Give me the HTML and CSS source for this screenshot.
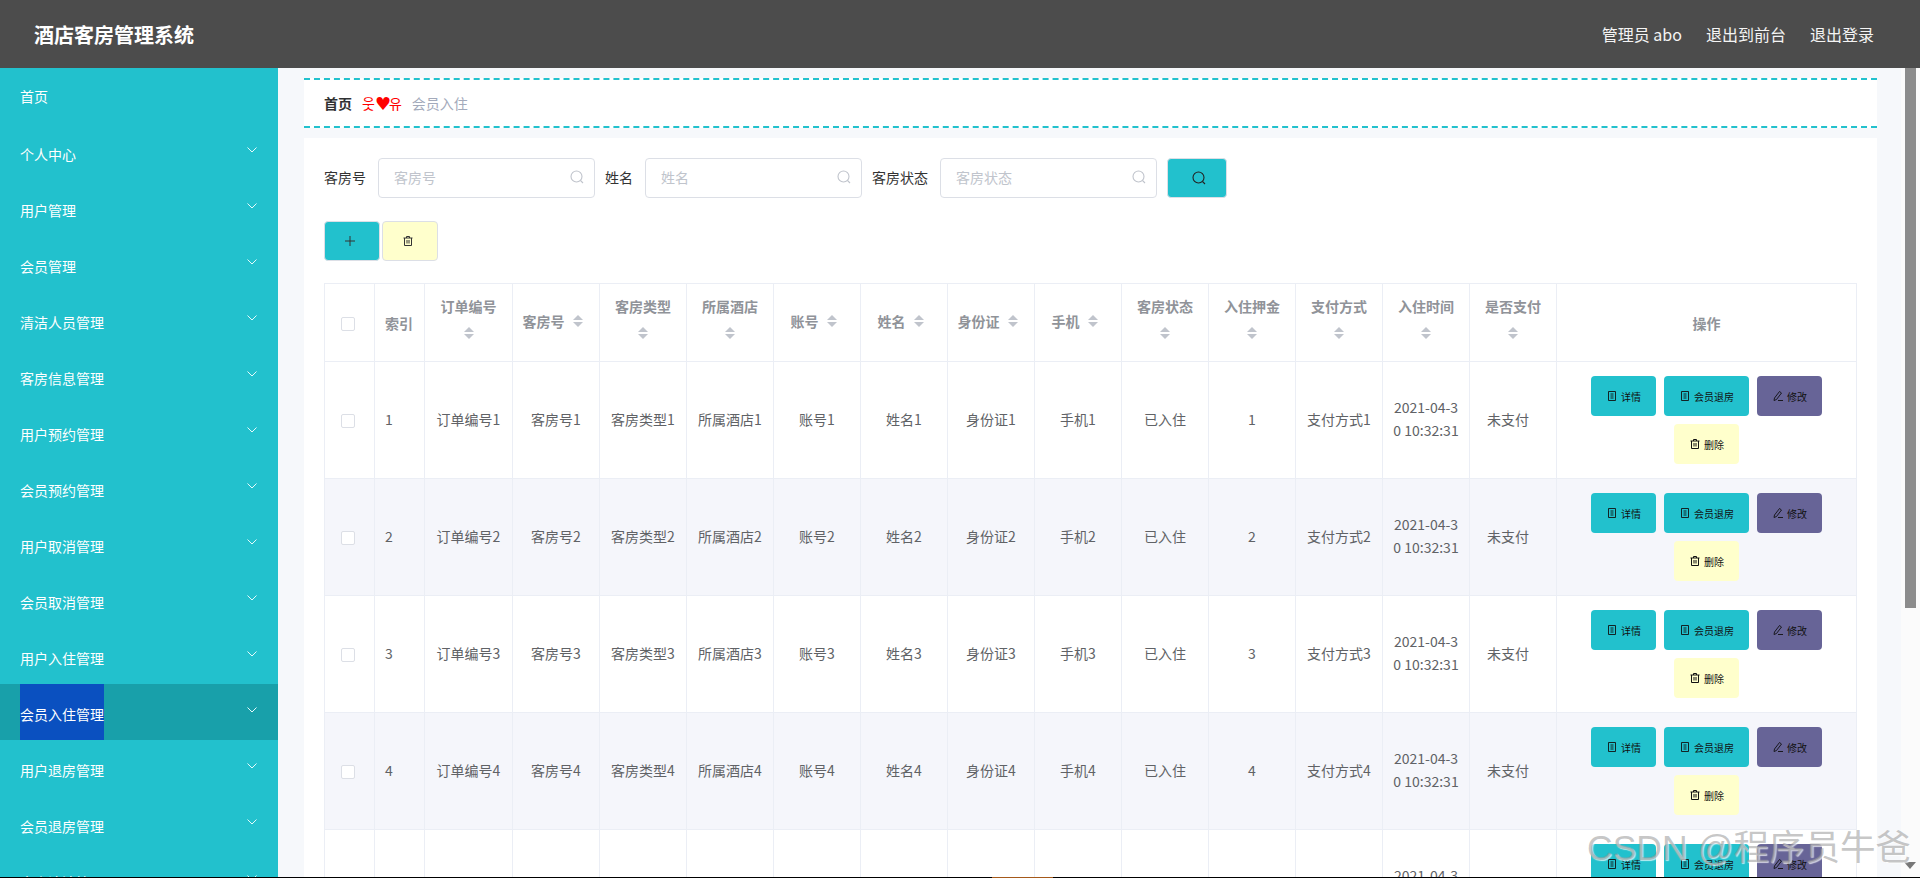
FILE: index.html
```html
<!DOCTYPE html>
<html>
<head>
    <title>酒店客房管理系统</title>
    <link rel="stylesheet" href="styles.css">
</head>
<body>
    <svg class="sprite" xmlns="http://www.w3.org/2000/svg">
        <symbol id="i-search" viewBox="0 0 14 14"><circle cx="6.5" cy="6.5" r="5.5" fill="none" stroke="currentColor" stroke-width="1.1"/><path d="M10.5 10.5L13 13" fill="none" stroke="currentColor" stroke-width="1.1"/></symbol>
        <symbol id="i-plus" viewBox="0 0 12 12"><path d="M6 1v10M1 6h10" fill="none" stroke="currentColor" stroke-width="1"/></symbol>
        <symbol id="i-trash" viewBox="0 0 12 12"><path d="M1.5 3h9M4.5 3V1.5h3V3M2.5 3v7.5h7V3M5 5v3.5M7 5v3.5" fill="none" stroke="currentColor" stroke-width="1"/></symbol>
        <symbol id="i-doc" viewBox="0 0 12 12"><path d="M2.5 1.5h7v9h-7zM4.5 4h3M4.5 6h3M4.5 8h3" fill="none" stroke="currentColor" stroke-width=".9"/></symbol>
        <symbol id="i-edit" viewBox="0 0 12 12"><path d="M7.5 1.5l2 1.5L4.5 9.5l-2.5 1 .5-2.5zM6 10.5h5" fill="none" stroke="currentColor" stroke-width=".9"/></symbol>
        <symbol id="i-down" viewBox="0 0 10 6"><path d="M.5 .5L5 5 9.5 .5" fill="none" stroke="currentColor" stroke-width="1"/></symbol>
    </svg>

    <header class="topbar">
        <div class="brand">酒店客房管理系统</div>
        <div class="top-links">
            <span>管理员 abo</span>
            <span>退出到前台</span>
            <span>退出登录</span>
        </div>
    </header>

    <div class="layout">
        <ul class="side-menu">
            <li class="menu-item home"><span class="menu-text">首页</span></li>
            <li class="menu-item"><span class="menu-text">个人中心</span><svg class="chevron"><use href="#i-down"/></svg></li>
            <li class="menu-item"><span class="menu-text">用户管理</span><svg class="chevron"><use href="#i-down"/></svg></li>
            <li class="menu-item"><span class="menu-text">会员管理</span><svg class="chevron"><use href="#i-down"/></svg></li>
            <li class="menu-item"><span class="menu-text">清洁人员管理</span><svg class="chevron"><use href="#i-down"/></svg></li>
            <li class="menu-item"><span class="menu-text">客房信息管理</span><svg class="chevron"><use href="#i-down"/></svg></li>
            <li class="menu-item"><span class="menu-text">用户预约管理</span><svg class="chevron"><use href="#i-down"/></svg></li>
            <li class="menu-item"><span class="menu-text">会员预约管理</span><svg class="chevron"><use href="#i-down"/></svg></li>
            <li class="menu-item"><span class="menu-text">用户取消管理</span><svg class="chevron"><use href="#i-down"/></svg></li>
            <li class="menu-item"><span class="menu-text">会员取消管理</span><svg class="chevron"><use href="#i-down"/></svg></li>
            <li class="menu-item"><span class="menu-text">用户入住管理</span><svg class="chevron"><use href="#i-down"/></svg></li>
            <li class="menu-item active"><span class="menu-text">会员入住管理</span><svg class="chevron"><use href="#i-down"/></svg></li>
            <li class="menu-item"><span class="menu-text">用户退房管理</span><svg class="chevron"><use href="#i-down"/></svg></li>
            <li class="menu-item"><span class="menu-text">会员退房管理</span><svg class="chevron"><use href="#i-down"/></svg></li>
            <li class="menu-item"><span class="menu-text">客房清洁管理</span><svg class="chevron"><use href="#i-down"/></svg></li>
        </ul>

        <main class="main">
            <div class="crumbs">
                <span class="crumb-home">首页</span>
                <span class="crumb-sep">웃<b class="heart">♥</b>유</span>
                <span class="crumb-now">会员入住</span>
            </div>

            <div class="card">
                <div class="search-row">
                    <label>客房号</label>
                    <div class="search-input"><span>客房号</span><svg class="input-icon"><use href="#i-search"/></svg></div>
                    <label>姓名</label>
                    <div class="search-input"><span>姓名</span><svg class="input-icon"><use href="#i-search"/></svg></div>
                    <label>客房状态</label>
                    <div class="search-input"><span>客房状态</span><svg class="input-icon"><use href="#i-search"/></svg></div>
                    <button class="btn-search"><svg class="icon-14"><use href="#i-search"/></svg></button>
                </div>

                <div class="tool-row">
                    <button class="btn-tool teal"><svg class="icon-12"><use href="#i-plus"/></svg></button>
                    <button class="btn-tool yellow"><svg class="icon-12"><use href="#i-trash"/></svg></button>
                </div>

                <table class="grid">
                    <colgroup>
                        <col class="col-s"><col class="col-s"><col class="col-l">
                        <col class="col-m"><col class="col-m"><col class="col-m"><col class="col-m">
                        <col class="col-m"><col class="col-m"><col class="col-m"><col class="col-m">
                        <col class="col-m"><col class="col-m"><col class="col-m"><col class="col-m">
                        <col class="col-op">
                    </colgroup>
                    <thead>
                        <tr>
                            <th><span class="check"></span></th>
                            <th class="left">索引</th>
                            <th><div class="th-in"><span>订单编号</span><i class="sort"></i></div></th>
                            <th><div class="th-in short"><span>客房号</span><i class="sort"></i></div></th>
                            <th><div class="th-in"><span>客房类型</span><i class="sort"></i></div></th>
                            <th><div class="th-in"><span>所属酒店</span><i class="sort"></i></div></th>
                            <th><div class="th-in short"><span>账号</span><i class="sort"></i></div></th>
                            <th><div class="th-in short"><span>姓名</span><i class="sort"></i></div></th>
                            <th><div class="th-in short"><span>身份证</span><i class="sort"></i></div></th>
                            <th><div class="th-in short"><span>手机</span><i class="sort"></i></div></th>
                            <th><div class="th-in"><span>客房状态</span><i class="sort"></i></div></th>
                            <th><div class="th-in"><span>入住押金</span><i class="sort"></i></div></th>
                            <th><div class="th-in"><span>支付方式</span><i class="sort"></i></div></th>
                            <th><div class="th-in"><span>入住时间</span><i class="sort"></i></div></th>
                            <th><div class="th-in"><span>是否支付</span><i class="sort"></i></div></th>
                            <th>操作</th>
                        </tr>
                    </thead>
                    <tbody>
                        <tr>
                            <td><span class="check"></span></td><td class="left">1</td>
                            <td>订单编号1</td><td>客房号1</td><td>客房类型1</td><td>所属酒店1</td><td>账号1</td><td>姓名1</td><td>身份证1</td><td>手机1</td>
                            <td>已入住</td><td>1</td><td>支付方式1</td><td>2021-04-30 10:32:31</td><td class="pay">未支付</td>
                            <td class="ops"><div class="op-wrap">
                                <button class="btn-op teal"><svg class="icon-12"><use href="#i-doc"/></svg>详情</button>
                                <button class="btn-op teal"><svg class="icon-12"><use href="#i-doc"/></svg>会员退房</button>
                                <button class="btn-op purple"><svg class="icon-12"><use href="#i-edit"/></svg>修改</button>
                                <button class="btn-op yellow"><svg class="icon-12"><use href="#i-trash"/></svg>删除</button>
                            </div></td>
                        </tr>
                        <tr>
                            <td><span class="check"></span></td><td class="left">2</td>
                            <td>订单编号2</td><td>客房号2</td><td>客房类型2</td><td>所属酒店2</td><td>账号2</td><td>姓名2</td><td>身份证2</td><td>手机2</td>
                            <td>已入住</td><td>2</td><td>支付方式2</td><td>2021-04-30 10:32:31</td><td class="pay">未支付</td>
                            <td class="ops"><div class="op-wrap">
                                <button class="btn-op teal"><svg class="icon-12"><use href="#i-doc"/></svg>详情</button>
                                <button class="btn-op teal"><svg class="icon-12"><use href="#i-doc"/></svg>会员退房</button>
                                <button class="btn-op purple"><svg class="icon-12"><use href="#i-edit"/></svg>修改</button>
                                <button class="btn-op yellow"><svg class="icon-12"><use href="#i-trash"/></svg>删除</button>
                            </div></td>
                        </tr>
                        <tr>
                            <td><span class="check"></span></td><td class="left">3</td>
                            <td>订单编号3</td><td>客房号3</td><td>客房类型3</td><td>所属酒店3</td><td>账号3</td><td>姓名3</td><td>身份证3</td><td>手机3</td>
                            <td>已入住</td><td>3</td><td>支付方式3</td><td>2021-04-30 10:32:31</td><td class="pay">未支付</td>
                            <td class="ops"><div class="op-wrap">
                                <button class="btn-op teal"><svg class="icon-12"><use href="#i-doc"/></svg>详情</button>
                                <button class="btn-op teal"><svg class="icon-12"><use href="#i-doc"/></svg>会员退房</button>
                                <button class="btn-op purple"><svg class="icon-12"><use href="#i-edit"/></svg>修改</button>
                                <button class="btn-op yellow"><svg class="icon-12"><use href="#i-trash"/></svg>删除</button>
                            </div></td>
                        </tr>
                        <tr>
                            <td><span class="check"></span></td><td class="left">4</td>
                            <td>订单编号4</td><td>客房号4</td><td>客房类型4</td><td>所属酒店4</td><td>账号4</td><td>姓名4</td><td>身份证4</td><td>手机4</td>
                            <td>已入住</td><td>4</td><td>支付方式4</td><td>2021-04-30 10:32:31</td><td class="pay">未支付</td>
                            <td class="ops"><div class="op-wrap">
                                <button class="btn-op teal"><svg class="icon-12"><use href="#i-doc"/></svg>详情</button>
                                <button class="btn-op teal"><svg class="icon-12"><use href="#i-doc"/></svg>会员退房</button>
                                <button class="btn-op purple"><svg class="icon-12"><use href="#i-edit"/></svg>修改</button>
                                <button class="btn-op yellow"><svg class="icon-12"><use href="#i-trash"/></svg>删除</button>
                            </div></td>
                        </tr>
                        <tr>
                            <td><span class="check"></span></td><td class="left">5</td>
                            <td>订单编号5</td><td>客房号5</td><td>客房类型5</td><td>所属酒店5</td><td>账号5</td><td>姓名5</td><td>身份证5</td><td>手机5</td>
                            <td>已入住</td><td>5</td><td>支付方式5</td><td>2021-04-30 10:32:31</td><td class="pay">未支付</td>
                            <td class="ops"><div class="op-wrap">
                                <button class="btn-op teal"><svg class="icon-12"><use href="#i-doc"/></svg>详情</button>
                                <button class="btn-op teal"><svg class="icon-12"><use href="#i-doc"/></svg>会员退房</button>
                                <button class="btn-op purple"><svg class="icon-12"><use href="#i-edit"/></svg>修改</button>
                                <button class="btn-op yellow"><svg class="icon-12"><use href="#i-trash"/></svg>删除</button>
                            </div></td>
                        </tr>
                    </tbody>
                </table>
            </div>
        </main>

        <div class="scroll-track">
            <div class="scroll-thumb"></div>
            <div class="scroll-arrow"></div>
        </div>
    </div>

    <div class="watermark">CSDN @程序员牛爸</div>
    <div class="bottom-line"><span class="bottom-tab"></span></div>
</body>
</html>
```

FILE: styles.css
```css
* { margin: 0; padding: 0; box-sizing: border-box; }
html, body { height: 878px; overflow: hidden; }
body {
    position: relative; background: #f6f8fb; color: #606266;
    font-family: "Noto Sans CJK SC", "Noto Sans", sans-serif; font-size: 14px;
}
button { font-family: inherit; cursor: pointer; }
svg { display: block; flex: none; }
.sprite { position: absolute; width: 0; height: 0; }
.icon-12 { width: 12px; height: 12px; }
.icon-14 { width: 14px; height: 14px; }

/* top bar */
.topbar {
    display: flex; justify-content: space-between; align-items: center;
    height: 68px; padding: 0 46px 0 34px; background: #4c4c4c; color: white;
}
.brand { font-size: 20px; font-weight: bold; }
.top-links { display: flex; gap: 24px; font-size: 16px; color: #f4f4f4; }

.layout { display: flex; height: 810px; }

/* side menu */
.side-menu { flex: none; width: 278px; list-style: none; overflow: hidden; background: #22c1cd; color: white; }
.menu-item {
    display: flex; justify-content: space-between; align-items: center;
    height: 56px; padding: 0 21px 0 20px;
}
.menu-text { display: block; height: 56px; line-height: 60px; }
.home .menu-text { line-height: 56px; }
.chevron { width: 10px; height: 6px; margin-top: -5px; color: #e4fafb; }
.active { background: #18a0aa; }
.active .menu-text { background: #0a50c0; }

/* content */
.main { flex: 1; min-width: 0; padding: 10px 24px 0 26px; overflow: hidden; }
.crumbs {
    display: flex; align-items: center; gap: 10px;
    height: 50px; padding: 0 20px; margin-bottom: 10px; background: white;
    border-top: 2px dashed #22c1cd; border-bottom: 2px dashed #22c1cd;
}
.crumb-home { font-weight: bold; color: #303133; }
.crumb-sep { display: flex; align-items: center; color: red; font-family: "Noto Sans CJK KR", sans-serif; }
.heart { width: 14px; margin-top: 2px; text-align: center; font-family: "DejaVu Sans", sans-serif; font-size: 18px; font-weight: normal; line-height: 20px; }
.crumb-now { color: #a3aabb; }

.card { padding: 20px; background: white; }
.search-row { display: flex; align-items: center; height: 40px; color: #333; }
.search-row label { margin: -2px 12px 0 0; }
.search-input {
    display: flex; justify-content: space-between; align-items: center;
    width: 217px; height: 40px; margin-right: 10px; padding: 0 10px 2px 15px;
    border: 1px solid #dcdfe6; border-radius: 4px; color: #c0c4cc;
}
.input-icon { width: 14px; height: 14px; color: #c0c4cc; }
.btn-search {
    display: flex; justify-content: center; align-items: center;
    width: 60px; height: 40px; padding-left: 4px; background: #22c1cd; color: #222;
    border: 1px solid #dcdfe6; border-radius: 4px;
}
.tool-row { display: flex; gap: 2px; margin: 23px 0 22px; }
.btn-tool {
    display: flex; justify-content: center; align-items: center;
    width: 56px; height: 40px; padding-right: 5px; border: 1px solid #dcdfe6; border-radius: 4px; color: #333;
}
.teal { background: #22c1cd; }
.yellow { background: #ffffcc; }
.purple { background: #676497; }

/* table */
.grid {
    width: 1533px; table-layout: fixed; border-collapse: separate; border-spacing: 0;
    border-top: 1px solid #ebeef5; border-left: 1px solid #ebeef5;
}
.col-s { width: 50px; }
.col-l { width: 88px; }
.col-m { width: 87px; }
.col-op { width: 300px; }
.grid th, .grid td {
    padding: 0 10px; text-align: center; vertical-align: middle;
    border-right: 1px solid #ebeef5; border-bottom: 1px solid #ebeef5;
}
.grid th { height: 78px; color: #909399; font-weight: bold; line-height: 24px; }
.grid td { height: 117px; padding-bottom: 2px; line-height: 23px; word-break: break-all; }
.grid th.left, .grid td.left { text-align: left; }
.grid td.pay { padding-right: 20px; }
.grid tbody tr:nth-child(even) td { background: #f5f6fb; }
.th-in { display: flex; flex-wrap: wrap; justify-content: center; align-items: center; column-gap: 8px; margin-top: -4px; }
.th-in.short { margin-left: -7px; }
.sort { position: relative; display: block; width: 10px; height: 30px; }
.sort::before, .sort::after {
    content: ""; position: absolute; left: 0;
    border-left: 5px solid transparent; border-right: 5px solid transparent;
}
.sort::before { top: 9px; border-bottom: 5px solid #c0c4cc; }
.sort::after { top: 16px; border-top: 5px solid #c0c4cc; }
.check {
    display: block; width: 14px; height: 14px; margin: 3px 0 0 6px;
    background: white; border: 1px solid #dcdfe6; border-radius: 2px;
}
.grid td.ops { padding: 0; }
.op-wrap { display: flex; flex-wrap: wrap; justify-content: center; gap: 8px; padding: 0 30px; }
.btn-op {
    display: flex; align-items: center; gap: 3px;
    height: 40px; padding: 0 15px; border: none; border-radius: 4px;
    font-size: 10px; color: #111; white-space: nowrap;
}

/* fake page scrollbar */
.scroll-track { position: relative; flex: none; width: 19px; background: #fbfbfb; }
.scroll-thumb { width: 11px; height: 540px; margin-left: 4px; background: #8c8c8c; }
.scroll-arrow {
    position: absolute; left: 3px; bottom: 9px;
    border-left: 6.5px solid transparent; border-right: 6.5px solid transparent; border-top: 7px solid #777;
}

/* overlays */
.watermark {
    position: absolute; left: 1587px; top: 823px; white-space: nowrap;
    font-family: "Liberation Sans", "Noto Sans CJK SC", sans-serif; font-size: 35.5px; line-height: 50px;
    color: rgba(150, 150, 150, 0.55); text-shadow: 1px 1px 1px rgba(255, 255, 255, 0.7);
}
.bottom-line { position: absolute; left: 0; right: 0; bottom: 0; height: 1px; background: black; }
.bottom-tab { position: absolute; left: 992px; width: 61px; height: 1px; background: #a5591a; }
```
